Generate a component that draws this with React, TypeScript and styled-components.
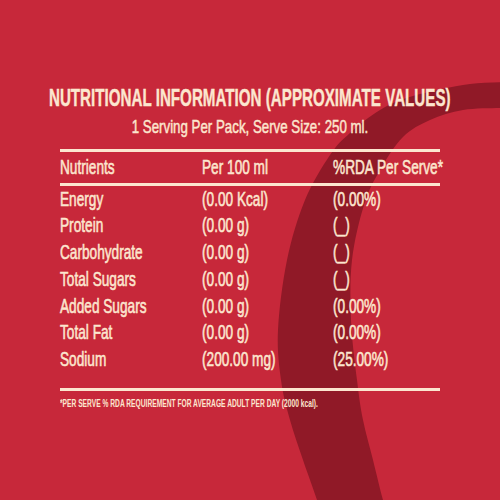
import React from "react";
import styled, { createGlobalStyle } from "styled-components";

const RED = "#c7283a";
const DARK = "#901927";
const CREAM = "#fce6cf";

const Global = createGlobalStyle`
  html, body { margin: 0; padding: 0; background: ${RED}; }
`;

const Page = styled.div`
  position: relative;
  width: 500px;
  height: 500px;
  overflow: hidden;
  background: ${RED};
  color: ${CREAM};
  font-family: "Liberation Sans", Arial, sans-serif;
`;

const Swoosh = styled.svg`
  position: absolute;
  left: 0;
  top: 0;
  width: 500px;
  height: 500px;
`;

const Content = styled.div`
  position: relative;
  display: flex;
  flex-direction: column;
  align-items: center;
  padding-top: 86px;
`;

const Squeeze = styled.span<{ $k: number; $origin?: string }>`
  display: inline-block;
  transform: scaleX(${(p) => p.$k});
  transform-origin: ${(p) => p.$origin ?? "left"} center;
`;

const Title = styled.h1`
  margin: 0;
  font-size: 24px;
  line-height: 24px;
  font-weight: 700;
  white-space: nowrap;
  -webkit-text-stroke: 0.4px ${CREAM};
`;

const Subtitle = styled.p`
  margin: 6px 0 0;
  font-size: 19px;
  line-height: 22px;
  font-weight: 400;
  white-space: nowrap;
  -webkit-text-stroke: 0.5px ${CREAM};
`;

const Table = styled.div`
  width: 380px;
  margin-top: 11px;
  display: flex;
  flex-direction: column;
`;

const Rule = styled.div<{ $gap: number }>`
  height: 3px;
  background: ${CREAM};
  margin-top: ${(p) => p.$gap}px;
`;

const Row = styled.div<{ $pad?: number }>`
  display: grid;
  grid-template-columns: 142px 131px 1fr;
  font-size: 21px;
  line-height: 26.7px;
  white-space: nowrap;
  padding-top: ${(p) => p.$pad ?? 0}px;
  -webkit-text-stroke: 0.6px ${CREAM};
`;

const Footnote = styled.p`
  margin: 5.5px 0 0;
  font-size: 11px;
  line-height: 13px;
  font-weight: 700;
  white-space: nowrap;
`;

type Pt = [number, number];

function curve(pts: Pt[], start: boolean): string {
  let d = start ? `M${pts[0][0]} ${pts[0][1]}` : `L${pts[0][0]} ${pts[0][1]}`;
  for (let i = 0; i < pts.length - 1; i++) {
    const p0 = pts[Math.max(0, i - 1)];
    const p1 = pts[i];
    const p2 = pts[i + 1];
    const p3 = pts[Math.min(pts.length - 1, i + 2)];
    const c1: Pt = [p1[0] + (p2[0] - p0[0]) / 6, p1[1] + (p2[1] - p0[1]) / 6];
    const c2: Pt = [p2[0] - (p3[0] - p1[0]) / 6, p2[1] - (p3[1] - p1[1]) / 6];
    d += ` C${c1[0].toFixed(1)} ${c1[1].toFixed(1)} ${c2[0].toFixed(1)} ${c2[1].toFixed(1)} ${p2[0]} ${p2[1]}`;
  }
  return d;
}

const outer: Pt[] = [
  [520, 82],
  [470, 84],
  [413, 96],
  [380, 110],
  [350, 133],
  [330, 155],
  [305, 200],
  [287, 260],
  [278, 330],
  [281, 380],
  [290, 420],
  [303, 460],
  [317, 500],
  [322, 520],
];
const inner: Pt[] = [
  [390, 520],
  [383, 500],
  [373, 460],
  [363, 420],
  [357, 380],
  [351, 320],
  [352, 260],
  [364, 205],
  [380, 170],
  [403, 137],
  [430, 120],
  [463, 110],
  [500, 108],
  [520, 108],
];
const swooshPath = curve(outer, true) + " " + curve(inner, false) + " Z";

const rows: [string, string, string][] = [
  ["Energy", "(0.00 Kcal)", "(0.00%)"],
  ["Protein", "(0.00 g)", "(_)"],
  ["Carbohydrate", "(0.00 g)", "(_)"],
  ["Total Sugars", "(0.00 g)", "(_)"],
  ["Added Sugars", "(0.00 g)", "(0.00%)"],
  ["Total Fat", "(0.00 g)", "(0.00%)"],
  ["Sodium", "(200.00 mg)", "(25.00%)"],
];

const K = 0.65;

export default function App() {
  return (
    <>
      <Global />
      <Page>
        <Swoosh viewBox="0 0 500 500">
          <path d={swooshPath} fill={DARK} />
        </Swoosh>
        <Content>
          <Title>
            <Squeeze $k={0.632} $origin="center">
              NUTRITIONAL INFORMATION (APPROXIMATE VALUES)
            </Squeeze>
          </Title>
          <Subtitle>
            <Squeeze $k={0.7} $origin="center">
              1 Serving Per Pack, Serve Size: 250 ml.
            </Squeeze>
          </Subtitle>
          <Table>
            <Rule $gap={0} />
            <Row $pad={1.5}>
              <span><Squeeze $k={K}>Nutrients</Squeeze></span>
              <span><Squeeze $k={K}>Per 100 ml</Squeeze></span>
              <span><Squeeze $k={K}>%RDA Per Serve*</Squeeze></span>
            </Row>
            <Rule $gap={2.5} />
            {rows.map(([a, b, c]) => (
              <Row key={a}>
                <span><Squeeze $k={K}>{a}</Squeeze></span>
                <span><Squeeze $k={K}>{b}</Squeeze></span>
                <span><Squeeze $k={K}>{c}</Squeeze></span>
              </Row>
            ))}
            <Rule $gap={15.4} />
            <Footnote>
              <Squeeze $k={0.606}>
                *PER SERVE % RDA REQUIREMENT FOR AVERAGE ADULT PER DAY (2000 kcal).
              </Squeeze>
            </Footnote>
          </Table>
        </Content>
      </Page>
    </>
  );
}
